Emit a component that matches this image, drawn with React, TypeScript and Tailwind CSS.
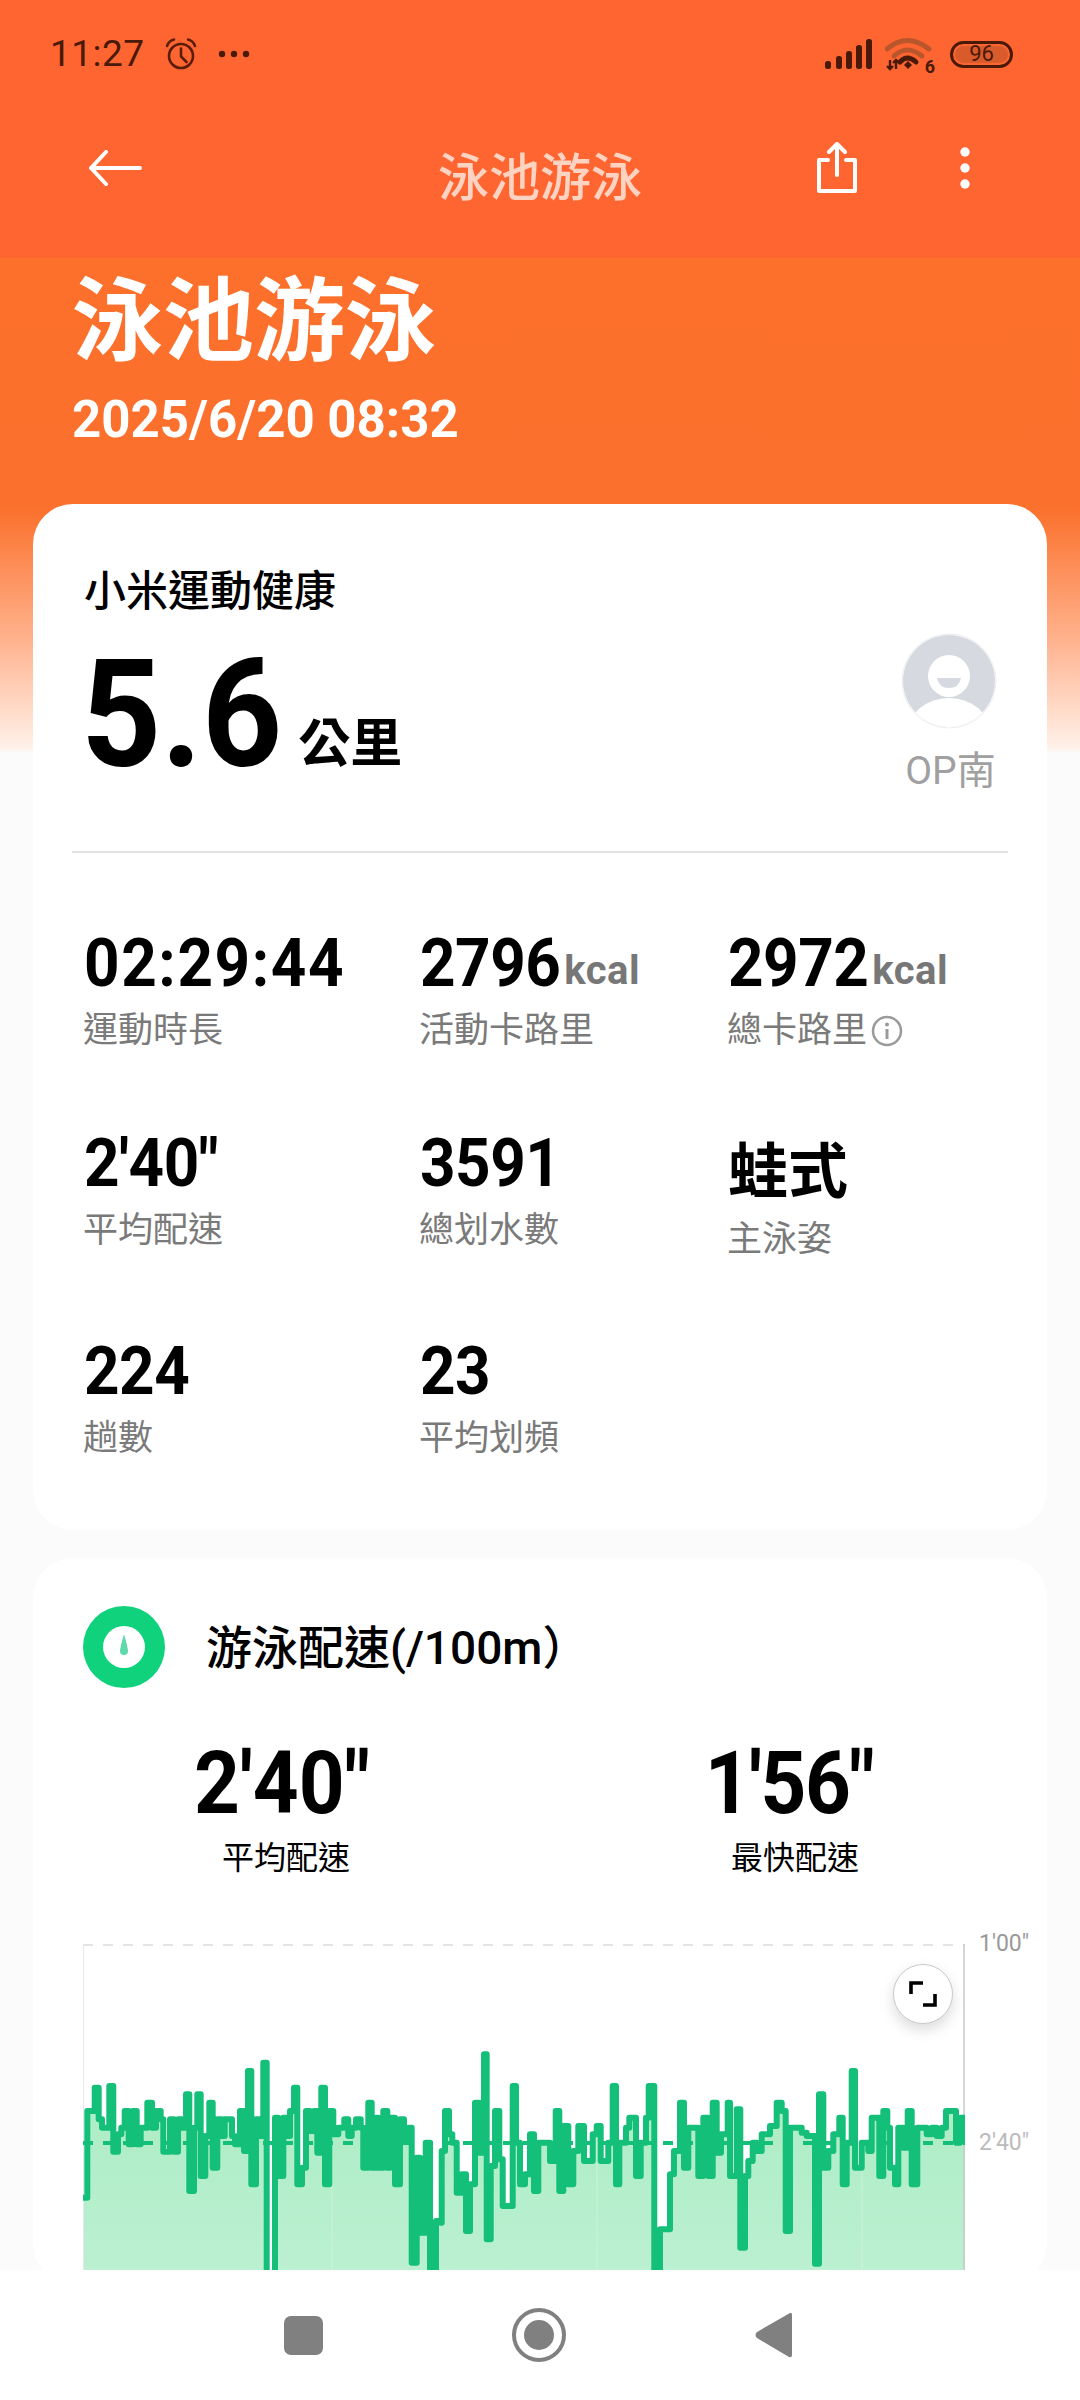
import React from "react";

const z4: [number, number][] = [[70,890],[82,630],[104,560],[116,655],[126,680],[148,555],[160,752],[174,700],[184,680],[194,630],[206,730],[218,630],[230,730],[242,680],[262,605],[276,680],[288,630],[302,655],[310,752],[324,752],[330,655],[342,752],[354,655],[366,680],[378,580],[388,870],[402,680],[412,580],[422,825],[436,705],[448,605],[458,800],[472,655],[484,705],[494,655],[516,705],[525,730],[540,630],[552,750],[564,510],[574,850],[588,655],[600,705],[610,485],[620,1140],[645,650],[655,825],[670,650],[680,705],[690,630],[702,560],[712,850],[726,800],[738,630],[750,690],[762,630],[772,755],[784,560],[795,850],[808,630],[820,700],[835,680],[853,655],[865,705],[875,680],[888,655],[902,680],[910,800],[925,605],[935,800],[948,650],[955,800],[970,630],[982,800],[990,650],[1005,850],[1020,655],[1032,720],[1045,680],[1055,1085],[1070,770],[1080,995],[1097,725],[1110,1140],[1128,960],[1142,965],[1145,750],[1155,630],[1167,700],[1177,725],[1190,875],[1205,820],[1218,990],[1230,850],[1245,605],[1258,755],[1272,460],[1280,1015],[1292,795],[1305,630],[1318,775],[1328,915],[1358,555],[1368,725],[1380,850],[1395,820],[1410,700],[1422,870],[1435,725],[1470,780],[1487,630],[1498,870],[1510,675],[1525,850],[1540,750]];
const z5: [number, number][] = [[55,675],[72,780],[85,780],[98,700],[110,675],[122,780],[145,725],[158,555],[168,850],[178,725],[198,680],[208,650],[220,650],[228,825],[242,725],[258,650],[266,555],[283,1140],[300,985],[330,820],[342,750],[360,605],[372,800],[385,680],[415,825],[430,650],[445,825],[458,605],[470,755],[483,700],[503,605],[510,825],[530,625],[541,1040],[555,825],[565,780],[578,725],[590,750],[605,700],[630,675],[650,605],[665,630],[677,990],[690,680],[710,680],[725,695],[740,705],[765,1088],[777,580],[790,800],[805,750],[820,700],[838,650],[848,850],[860,725],[875,510],[885,800],[905,725],[925,750],[935,650],[958,825],[970,630],[982,680],[990,800],[1005,850],[1015,680],[1030,740],[1043,630],[1055,850],[1072,680],[1100,700],[1115,680],[1130,705],[1145,680],[1158,630],[1188,725],[1200,650],[1214,720]];

const pts: [number, number][] = [
  ...z4.map(([x, y]) => [60 + x / 3 - 83, 1900 + y / 3 - 1943] as [number, number]),
  ...z5.map(([x, y]) => [560 + x / 3 - 83, 1900 + y / 3 - 1943] as [number, number]),
];
const linePath = pts
  .map(([x, y], i) => (i === 0 ? `M${x.toFixed(1)} ${y.toFixed(1)}` : `H${x.toFixed(1)}V${y.toFixed(1)}`))
  .join("");
const areaPath = `${linePath}H882V340H0Z`;

const FONT = "font-['Roboto','Noto_Sans_CJK_TC',sans-serif]";

function Stat({ value, unit, label, info, cjk, wide }: { value: string; unit?: string; label: string; info?: boolean; cjk?: boolean; wide?: boolean }) {
  return (
    <div className={cjk ? "flex flex-col mt-[-4px]" : "flex flex-col"}>
      {cjk ? (
        <div className="h-[92px] text-[60px] leading-[92px] font-bold text-black">{value}</div>
      ) : (
        <div className="h-[64px] text-[62px] leading-[64px] font-bold text-black">
          <span className={`inline-block scale-y-[1.09] ${wide ? "tracking-[1.6px]" : "tracking-[-0.5px]"}`}>{value}</span>
          {unit && <span className="text-[40px] text-[#777777] font-bold tracking-[0.5px] ml-[4px]">{unit}</span>}
        </div>
      )}
      <div className={`${cjk ? "mt-[-2px]" : "mt-[13px]"} ml-[-1px] flex items-center h-[46px] text-[35px] leading-[46px] text-[#7a7a7a]`}>
        {label}
        {info && (
          <svg className="ml-[4px]" width="32" height="32" viewBox="0 0 32 32" fill="none">
            <circle cx="16" cy="16" r="14" stroke="#9a9a9a" strokeWidth="2.5" />
            <circle cx="16" cy="9.5" r="2" fill="#9a9a9a" />
            <path d="M16 14v10" stroke="#9a9a9a" strokeWidth="3" />
          </svg>
        )}
      </div>
    </div>
  );
}

export default function App() {
  return (
    <div className={`${FONT} w-[1080px] h-[2400px] flex flex-col overflow-hidden bg-[#fbfbfb]`}>
      {/* top bar */}
      <header className="h-[258px] shrink-0 bg-[#ff6531] flex flex-col">
        <div className="h-[108px] flex items-center justify-between pl-[50px] pr-[67px] text-[#4a1a08]">
          <div className="flex items-center">
            <span className="text-[37px] leading-[40px] tracking-[0.5px]">11:27</span>
            <svg className="ml-[19px]" width="34" height="34" viewBox="0 0 34 34" fill="none" stroke="#5a1d08" strokeWidth="2.6" strokeLinecap="round">
              <circle cx="17" cy="19" r="12" />
              <path d="M17 11.5V19.5L22.5 25" />
              <path d="M3 9Q5 3.5 10 2.5M31 9Q29 3.5 24 2.5" />
            </svg>
            <svg className="ml-[19px]" width="34" height="10" viewBox="0 0 34 10" fill="#4a1a08">
              <circle cx="5" cy="5" r="3.2" />
              <circle cx="17" cy="5" r="3.2" />
              <circle cx="29" cy="5" r="3.2" />
            </svg>
          </div>
          <div className="flex items-center">
            <svg width="48" height="32" viewBox="0 0 48 32" fill="#4a1a08">
              <rect x="0" y="23" width="6" height="8" rx="2.5" />
              <rect x="11" y="18" width="6" height="13" rx="2.5" />
              <rect x="21" y="13" width="6" height="18" rx="2.5" />
              <rect x="31" y="7" width="6" height="24" rx="2.5" />
              <rect x="41" y="1" width="6" height="30" rx="2.5" />
            </svg>
            <div className="relative ml-[12px] w-[48px] h-[36px]">
              <svg width="48" height="36" viewBox="0 0 48 36" fill="none">
                <path d="M2 13Q22 -4 44 13" stroke="#b9562b" strokeWidth="5" strokeLinecap="round" />
                <path d="M9 20Q22 8 37 20" stroke="#b9562b" strokeWidth="5" strokeLinecap="round" />
                <path d="M15 26Q22 18 31 26" stroke="#4a1a08" strokeWidth="5" strokeLinecap="round" />
                <path d="M19 29L23 25L27 29L23 33Z" fill="#4a1a08" />
                <path d="M5 24V33M2 30L5 33L8 30M11 33V24M8 27L11 24L14 27" stroke="#4a1a08" strokeWidth="2.4" />
              </svg>
              <span className="absolute right-[-2px] bottom-[-4px] text-[18px] leading-[18px] font-bold">6</span>
            </div>
            <div className="relative ml-[17px] w-[63px] h-[27px] rounded-full border-[3px] border-[#4a1a08] flex items-center justify-center">
              <div className="absolute inset-[2px] rounded-full bg-[#d95a2b]" />
              <span className="relative text-[22px] leading-[22px] text-[#4a1a08]">96</span>
            </div>
          </div>
        </div>
        <div className="grid grid-cols-[1fr_auto_1fr] items-center h-[120px]">
          <div className="pl-[88px] flex">
            <svg width="54" height="36" viewBox="0 0 54 36" fill="none" stroke="#ffffff" strokeWidth="4" strokeLinecap="round" strokeLinejoin="round">
              <path d="M52 18H3M18 2L3 18L18 34" />
            </svg>
          </div>
          <div className="text-[51px] leading-[60px] font-medium text-[#ffd3c2] mt-[22px]">泳池游泳</div>
          <div className="flex items-center justify-end pr-[110px] gap-[101px]">
            <svg width="44" height="52" viewBox="0 0 44 52" fill="none" stroke="#ffffff" strokeWidth="4" strokeLinecap="round" strokeLinejoin="round">
              <path d="M13 18H4V49H40V18H31" />
              <path d="M22 33V3M14 10L22 2L30 10" />
            </svg>
            <svg width="10" height="42" viewBox="0 0 10 42" fill="#ffffff">
              <circle cx="5" cy="5" r="4.7" />
              <circle cx="5" cy="21" r="4.7" />
              <circle cx="5" cy="37" r="4.7" />
            </svg>
          </div>
        </div>
      </header>

      {/* scrolling content */}
      <main className="flex-1 min-h-0 overflow-hidden bg-[linear-gradient(180deg,#fc702c_0px,#fb702c_250px,#ffb18c_380px,#fff1e9_490px,#fbfbfb_495px)]">
        <div className="pl-[72px] pt-[10px]">
          <h1 className="text-[91px] leading-[108px] font-bold text-white">泳池游泳</h1>
          <div className="text-[51px] leading-[60px] mt-[14px] font-bold text-white">2025/6/20 08:32</div>
        </div>

        {/* summary card */}
        <section className="mx-[33px] mt-[54px] h-[1026px] rounded-[40px] bg-white pt-[60px]">
          <div className="flex justify-between pl-[51px] pr-[50px]">
            <div>
              <div className="text-[42px] leading-[56px] font-medium text-black">小米運動健康</div>
              <div className="flex items-baseline mt-[19px] ml-[-3px]">
                <span className="inline-block text-[140px] leading-[150px] font-bold text-black scale-y-[1.08]">5.6</span>
                <span className="ml-[16px] text-[52px] leading-[60px] font-bold text-black">公里</span>
              </div>
            </div>
            <div className="flex flex-col items-center mt-[68px]">
              <svg width="96" height="98" viewBox="0 0 96 98" fill="none">
                <defs>
                  <clipPath id="av"><circle cx="48" cy="49" r="46" /></clipPath>
                </defs>
                <circle cx="48" cy="49" r="47" stroke="#eeeeee" strokeWidth="1" />
                <g clipPath="url(#av)">
                  <rect width="96" height="98" fill="#d7d9e1" />
                  <circle cx="48" cy="44" r="21" fill="#ffffff" />
                  <path d="M36 46H60Q58 56 48 56Q38 56 36 46Z" fill="#d7d9e1" />
                  <ellipse cx="48" cy="102" rx="42" ry="36" fill="#ffffff" />
                </g>
              </svg>
              <div className="text-[39px] leading-[52px] text-[#a0a0a0] mt-[15px] ml-[3px]">OP南</div>
            </div>
          </div>
          <div className="mx-[39px] mt-[54px] h-[2px] bg-[#e2e2e2]" />
          <div className="grid grid-cols-[336px_308px_1fr] grid-rows-[200px_208px_auto] pl-[51px] mt-[78px]">
            <Stat value="02:29:44" label="運動時長" wide />
            <Stat value="2796" unit="kcal" label="活動卡路里" />
            <Stat value="2972" unit="kcal" label="總卡路里" info />
            <Stat value={"2'40\""} label="平均配速" />
            <Stat value="3591" label="總划水數" />
            <Stat value="蛙式" label="主泳姿" cjk />
            <Stat value="224" label="趟數" />
            <Stat value="23" label="平均划頻" />
          </div>
        </section>

        {/* pace card */}
        <section className="mx-[33px] mt-[28px] rounded-[40px] bg-white pt-[48px]">
          <div className="flex items-center pl-[50px]">
            <svg width="82" height="82" viewBox="0 0 82 82">
              <circle cx="41" cy="41" r="41" fill="#10d27c" />
              <circle cx="41" cy="41" r="21" fill="#ffffff" />
              <path d="M41 28Q45 42 45 45A4 4 0 0 1 37 45Q37 42 41 28Z" fill="#5fd9a9" />
            </svg>
            <div className="ml-[41px] text-[46px] leading-[60px] mt-[2px] font-medium text-black">游泳配速(/100m）</div>
          </div>
          <div className="flex mt-[53px]">
            <div className="flex flex-col items-center w-[500px]">
              <div className="text-[80px] leading-[84px] font-bold text-black scale-y-[1.1] ml-[-2px]">2'40"</div>
              <div className="text-[32px] leading-[44px] text-black mt-[11px] ml-[6px]">平均配速</div>
            </div>
            <div className="flex flex-col items-center w-[500px] ml-[9px]">
              <div className="text-[80px] leading-[84px] font-bold text-black scale-y-[1.1] tracking-[-1.5px] ml-[-6px]">1'56"</div>
              <div className="text-[32px] leading-[44px] text-black mt-[11px] ml-[6px]">最快配速</div>
            </div>
          </div>
          <div className="relative ml-[50px] mt-[64px] w-[882px] h-[340px]">
            <svg className="block" width="882" height="340" viewBox="0 0 882 340" fill="none">
              <defs>
                <linearGradient id="ga" x1="0" y1="0" x2="0" y2="1">
                  <stop offset="0" stopColor="#a9ecc1" />
                  <stop offset="1" stopColor="#bcf0d2" />
                </linearGradient>
              </defs>
              <path d={areaPath} fill="url(#ga)" />
              <path d="M249 150V340M514 150V340M779 150V340" stroke="#ffffff" strokeOpacity="0.15" strokeWidth="2" />
              <path d="M0 1H882" stroke="#e4e4e4" strokeWidth="2" strokeDasharray="10 10" />
              <path d="M0 0V340" stroke="#e8e8e8" strokeWidth="2" />
              <path d="M881 0V340" stroke="#c8c8c8" strokeWidth="1.5" />
              <path d="M0 199H882" stroke="#14bf79" strokeWidth="4" strokeDasharray="10 10" />
              <path d={linePath} stroke="#14bf79" strokeWidth="6" strokeLinejoin="round" strokeLinecap="round" />
            </svg>
            <span className="absolute left-[896px] top-[-14px] text-[23px] leading-[28px] text-[#999999]">1'00"</span>
            <span className="absolute left-[896px] top-[185px] text-[23px] leading-[28px] text-[#bbbbbb]">2'40"</span>
            <div className="absolute left-[810px] top-[20px] w-[60px] h-[60px] rounded-full bg-white border border-[#c9c9c9] shadow-[0_6px_14px_rgba(0,0,0,0.14)] flex items-center justify-center">
              <svg width="28" height="28" viewBox="0 0 28 28" fill="none" stroke="#000000" strokeWidth="3.6">
                <path d="M2 14V3H14" />
                <path d="M26 14V25H14" />
              </svg>
            </div>
          </div>
        </section>
      </main>

      {/* system nav */}
      <nav className="h-[130px] shrink-0 bg-white flex items-center relative">
        <div className="absolute left-[284px] top-[46px] w-[39px] h-[39px] rounded-[7px] bg-[#808080]" />
        <div className="absolute left-[512px] top-[38px] w-[54px] h-[54px] rounded-full border-[4px] border-[#808080] flex items-center justify-center">
          <div className="w-[30px] h-[30px] rounded-full bg-[#808080]" />
        </div>
        <svg className="absolute left-[754px] top-[41px]" width="40" height="48" viewBox="0 0 40 48" fill="#808080">
          <path d="M36 2Q38 1 38 4V44Q38 47 35 46L3 27Q0 24 3 21Z" />
        </svg>
      </nav>
    </div>
  );
}
